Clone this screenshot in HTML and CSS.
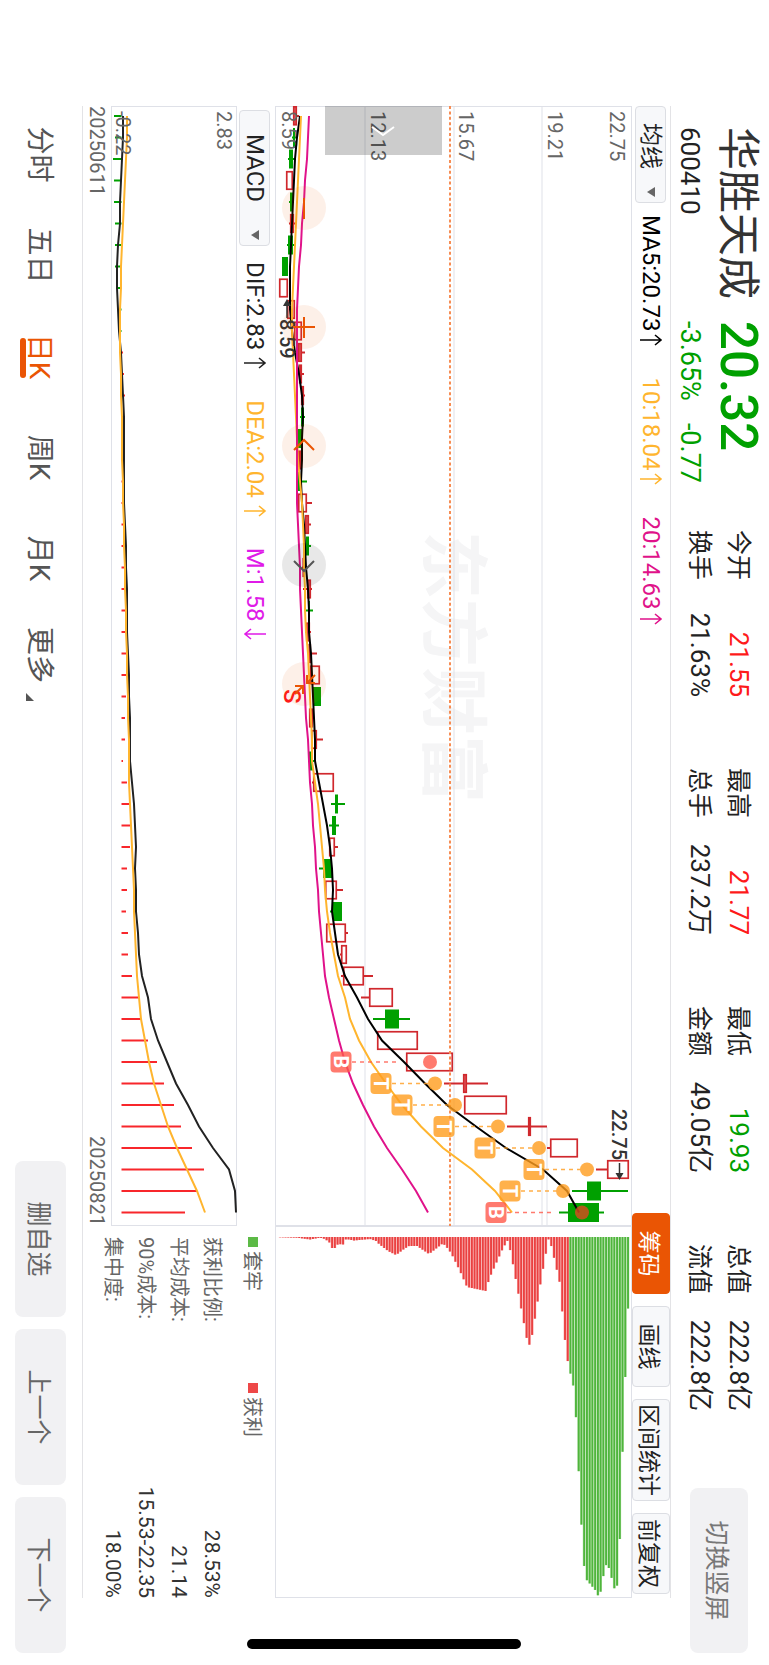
FILE: index.html
```html
<!DOCTYPE html>
<html lang="zh-CN">
  <head>
    <meta charset="UTF-8" />
    <meta name="viewport" content="width=device-width, initial-scale=1.0" />
    <title>华胜天成 600410</title>
    <link rel="stylesheet" href="styles.css">
  </head>
  <body>
    <div class="screen">
      <svg class="defs" width="0" height="0">
        <symbol id="arrow" viewBox="0 0 12 24">
          <path d="M6 23V2M1 8L6 2L11 8" fill="none" stroke="currentColor" stroke-width="1.6" />
        </symbol>
      </svg>

      <header class="header">
        <div class="quote">
          <h1 class="name">华胜天成</h1>
          <div class="price">20.32</div>
          <div class="code">600410</div>
          <div class="change"><span>-3.65%</span><span>-0.77</span></div>
        </div>
        <div class="stats">
          <div class="stat"><span>今开</span><span class="num up">21.55</span></div>
          <div class="stat"><span>最高</span><span class="num up">21.77</span></div>
          <div class="stat"><span>最低</span><span class="num down">19.93</span></div>
          <div class="stat"><span>总值</span><span class="num">222.8亿</span></div>
          <div class="stat"><span>换手</span><span class="num">21.63%</span></div>
          <div class="stat"><span>总手</span><span class="num">237.2万</span></div>
          <div class="stat"><span>金额</span><span class="num">49.05亿</span></div>
          <div class="stat"><span>流值</span><span class="num">222.8亿</span></div>
        </div>
        <button class="btn btn-switch">切换竖屏</button>
      </header>

      <div class="toolbar">
        <div class="picker">
          <select class="select" aria-label="主图指标">
            <option>均线</option>
          </select>
        </div>
        <div class="values">
          <span class="value black">MA5:20.73<svg class="arrow"><use href="#arrow" /></svg></span>
          <span class="value gold">10:18.04<svg class="arrow"><use href="#arrow" /></svg></span>
          <span class="value pink">20:14.63<svg class="arrow"><use href="#arrow" /></svg></span>
        </div>
        <div class="tools">
          <button class="tool tool-active">筹码</button>
          <button class="tool">画线</button>
          <button class="tool">区间统计</button>
          <button class="tool">前复权</button>
        </div>
      </div>

      <div class="charts">
        <div class="kline">
          <svg id="kline" class="chart" viewBox="0 0 1120 357"></svg>
          <button class="drawer" aria-label="展开">
            <svg viewBox="0 0 12 24"><path d="M2 1L10 12L2 23" fill="none" stroke="#fff" stroke-width="2" /></svg>
          </button>
          <div class="controls">
            <button class="control" aria-label="缩小">
              <svg viewBox="0 0 44 44"><path d="M12 22H33" /></svg>
            </button>
            <button class="control" aria-label="放大">
              <svg viewBox="0 0 44 44"><path d="M12 22H33M22 11V33" /></svg>
            </button>
            <button class="control" aria-label="左移">
              <svg viewBox="0 0 44 44"><path d="M26 12L16 22L26 32" /></svg>
            </button>
            <button class="control control-off" aria-label="右移">
              <svg viewBox="0 0 44 44"><path d="M18 12L28 22L18 32" /></svg>
            </button>
            <button class="control" aria-label="收起">
              <svg viewBox="0 0 44 44"><path d="M13 11L21 19M13 19H21V11M32 31L24 23M24 31V23H32" /></svg>
            </button>
          </div>
        </div>
        <svg id="chips" class="chart" viewBox="0 0 372 357"></svg>
      </div>

      <div class="lower">
        <div class="macd">
          <div class="macd-bar">
            <div class="picker picker-wide">
              <select class="select" aria-label="副图指标">
                <option>MACD</option>
              </select>
            </div>
            <div class="values">
              <span class="value dark">DIF:2.83<svg class="arrow"><use href="#arrow" /></svg></span>
              <span class="value gold">DEA:2.04<svg class="arrow"><use href="#arrow" /></svg></span>
              <span class="value violet">M:1.58<svg class="arrow arrow-down"><use href="#arrow" /></svg></span>
            </div>
          </div>
          <svg id="macd" class="chart" viewBox="0 0 1120 126"></svg>
          <div class="dates"><span>20250611</span><span>20250821</span></div>
        </div>
        <div class="cost">
          <div class="legend">
            <span class="legend-item"><i class="square square-green"></i>套牢</span>
            <span class="legend-item"><i class="square square-red"></i>获利</span>
          </div>
          <dl class="cost-list">
            <div><dt>获利比例:</dt><dd>28.53%</dd></div>
            <div><dt>平均成本:</dt><dd>21.14</dd></div>
            <div><dt>90%成本:</dt><dd>15.53-22.35</dd></div>
            <div><dt>集中度:</dt><dd>18.00%</dd></div>
          </dl>
        </div>
      </div>

      <footer class="footer">
        <nav class="periods">
          <a class="period" href="#">分时</a>
          <a class="period" href="#">五日</a>
          <a class="period period-active" href="#">日K</a>
          <a class="period" href="#">周K</a>
          <a class="period" href="#">月K</a>
          <a class="period period-more" href="#">更多</a>
        </nav>
        <div class="actions">
          <button class="btn">删自选</button>
          <button class="btn">上一个</button>
          <button class="btn">下一个</button>
        </div>
      </footer>

      <div class="home-indicator"></div>
    </div>

    <script src="script.js"></script>
  </body>
</html>
```

FILE: styles.css
```css
* {
  box-sizing: border-box;
}

html,
body {
  margin: 0;
  height: 100%;
  overflow: hidden;
  background-color: #fff;
}

body,
button,
select {
  font-family: Roboto, "Noto Sans CJK SC", sans-serif;
}

.defs {
  display: block;
}

/* The landscape screen is turned clockwise to fill a portrait window */
.screen {
  position: relative;
  display: flex;
  flex-direction: column;
  width: 100vh;
  height: 100vw;
  overflow: hidden;
  transform-origin: top left;
  transform: translateX(100vw) rotate(90deg);
  color: #222;
}

/* Header */
.header {
  display: flex;
  align-items: flex-start;
  height: 98px;
  padding: 0 12px 0 127px;
}

.quote {
  display: grid;
  grid-template-columns: auto auto;
  column-gap: 22px;
  row-gap: 8px;
  width: 403px;
  padding-top: 6px;
  justify-content: start;
  white-space: nowrap;
}

.name {
  margin: 0;
  font-size: 43px;
  font-weight: 400;
  line-height: 50px;
  color: #333;
}

.price {
  font-size: 51px;
  font-weight: 500;
  line-height: 50px;
  color: #00a000;
}

.code,
.change {
  font-size: 26px;
  line-height: 30px;
}

.change {
  display: flex;
  gap: 22px;
  font-size: 27px;
  color: #00a000;
}

.stats {
  display: grid;
  grid-template-columns: repeat(4, 167px);
  column-gap: 71px;
  padding-top: 11px;
}

.stat {
  display: flex;
  justify-content: space-between;
  font-size: 25px;
  line-height: 39px;
}

.num {
  font-size: 26px;
}

.up {
  color: #fe1a1a;
}

.down {
  color: #00a000;
}

.btn {
  width: 156px;
  height: 51px;
  padding: 0;
  border: none;
  border-radius: 8px;
  background-color: #f1f1f3;
  color: #666;
  font-size: 25px;
}

.btn-switch {
  width: 165px;
  height: 58px;
  margin: 21px 0 0 auto;
  color: #777;
}

/* Indicator bars */
.toolbar {
  display: flex;
  align-items: center;
  height: 39px;
  margin: 0 67px 0 106px;
  padding-right: 4px;
  border-top: 1px solid #e3e3e6;
}

.picker {
  position: relative;
  width: 97px;
  height: 31px;
}

.picker::after {
  content: "";
  position: absolute;
  right: 6px;
  top: 11px;
  border: 5px solid transparent;
  border-top: 8px solid #666;
  border-bottom: none;
  pointer-events: none;
}

.picker-wide {
  width: 136px;
}

.select {
  width: 100%;
  height: 100%;
  padding: 0 0 0 16px;
  border: 1px solid #dcdee3;
  border-radius: 4px;
  background-color: #f7f8fa;
  color: #222;
  font-size: 23px;
  line-height: 29px;
  appearance: none;
}

.picker-wide .select {
  padding-left: 23px;
  font-size: 24px;
}

.values {
  display: flex;
  gap: 31px;
  margin-left: 12px;
}

.picker-wide + .values {
  margin-left: 16px;
}

.value {
  display: flex;
  align-items: center;
  gap: 3px;
  font-size: 24px;
  line-height: 30px;
}

.macd-bar .value {
  gap: 7px;
}

.arrow {
  width: 12px;
  height: 24px;
}

.arrow-down {
  transform: rotate(180deg);
}

.black {
  color: #000;
}

.dark {
  color: #222;
}

.gold {
  color: #ffb52e;
}

.pink {
  color: #e0128a;
}

.violet {
  color: #e01be8;
}

.tools {
  display: flex;
  gap: 12px;
  height: 100%;
  margin-left: auto;
}

.tool {
  min-width: 81px;
  padding: 0 4px;
  border: 1px solid #dcdee3;
  border-radius: 4px;
  background-color: #f7f8fa;
  color: #222;
  font-size: 23px;
}

.tool-active {
  border-color: #ea5504;
  background-color: #ea5504;
  color: #fff;
}

/* Charts */
.charts,
.lower {
  display: grid;
  grid-template-columns: 1120fr 372fr;
  margin: 0 67px 0 106px;
}

.chart {
  display: block;
  width: 100%;
}

.axis {
  font-size: 20px;
  fill: #666;
}

.mark {
  font-size: 20px;
  font-weight: 500;
  fill: #333;
}

.watermark {
  font-size: 68px;
  font-weight: 700;
  fill: #f5f5f6;
}

.badge {
  font-size: 20px;
  font-weight: 700;
  text-anchor: middle;
  fill: #fff;
}

.sell {
  font-size: 24px;
  font-weight: 500;
  fill: #fe1a1a;
}

.kline {
  position: relative;
}

.drawer {
  position: absolute;
  left: 0;
  top: 190px;
  width: 49px;
  height: 117px;
  padding: 0;
  border: none;
  background-color: rgba(0, 0, 0, 0.2);
}

.drawer svg {
  display: block;
  width: 12px;
  height: 24px;
  margin: 0 auto;
}

.controls {
  position: absolute;
  left: 80px;
  bottom: 7px;
  display: flex;
  gap: 75px;
}

.control {
  width: 44px;
  height: 44px;
  padding: 0;
  border: none;
  border-radius: 50%;
  background-color: rgba(234, 85, 4, 0.09);
}

.control svg {
  display: block;
  width: 44px;
  height: 44px;
  fill: none;
  stroke: #ea5504;
  stroke-width: 2;
}

.control-off {
  background-color: rgba(0, 0, 0, 0.09);
}

.control-off svg {
  stroke: #555;
}

.lower {
  border-bottom: 1px solid #e3e3e6;
}

.macd-bar {
  display: flex;
  align-items: center;
  height: 38px;
  padding: 2px 0 0 4px;
}

.dates {
  display: flex;
  justify-content: space-between;
  font-size: 20px;
  line-height: 28px;
  color: #666;
}

.cost {
  padding-left: 11px;
  color: #666;
}

.legend {
  display: flex;
  gap: 92px;
  height: 47px;
  padding-bottom: 4px;
  align-items: center;
  font-size: 20px;
}

.legend-item {
  display: flex;
  align-items: center;
  gap: 4px;
}

.square {
  width: 10px;
  height: 10px;
}

.square-green {
  background-color: #5cba46;
}

.square-red {
  background-color: #ee4848;
}

.cost-list {
  margin: 0;
}

.cost-list div {
  display: flex;
  justify-content: space-between;
  line-height: 33px;
}

.cost-list dt {
  font-size: 20px;
}

.cost-list dd {
  margin: 0;
  font-size: 21px;
  color: #333;
}

/* Footer */
.footer {
  display: flex;
  flex: 1;
  align-items: center;
  justify-content: space-between;
  padding: 0 12px 0 104px;
}

.periods {
  display: flex;
  padding-top: 4px;
}

.period {
  position: relative;
  width: 101px;
  color: #555;
  font-size: 28px;
  line-height: 50px;
  text-align: center;
  text-decoration: none;
}

.period-active {
  color: #ea5504;
}

.period-active::after {
  content: "";
  position: absolute;
  left: 32px;
  bottom: 6px;
  width: 40px;
  height: 6px;
  border-radius: 3px;
  background-color: #ea5504;
}

.period-more {
  width: 92px;
}

.period-more::after {
  content: "";
  position: absolute;
  right: 0;
  bottom: 12px;
  border-left: 8px solid transparent;
  border-bottom: 8px solid #555;
}

.actions {
  display: flex;
  gap: 12px;
}

.home-indicator {
  position: absolute;
  right: 16px;
  top: 248px;
  width: 10px;
  height: 274px;
  border-radius: 5px;
  background-color: #000;
}
```

FILE: script.js
```js
var RED = "#d0282d";
var GREEN = "#00a000";
var GOLD = "#ffb52e";
var FRAME = "#dfe1e8";
var STEP = 21.5;

// [color, body low, body high, low, high], all as levels above the screen bottom
var candles = [
  ["r", 293, 297, 293, 299], ["g", 293, 295, 292, 296], ["g", 289, 293, 288, 294],
  ["r", 286, 293, 286, 293], ["g", 290, 293, 289, 294], ["r", 290, 294, 289, 296],
  ["g", 288, 293, 287, 294], ["g", 282, 288, 282, 288], ["r", 279, 288, 279, 288],
  ["r", 287, 295, 287, 295], ["r", 294, 302, 294, 302], ["r", 298, 302, 298, 305],
  ["r", 299, 302, 299, 304], ["r", 301, 304, 301, 305], ["g", 301, 304, 300, 305],
  ["g", 298, 302, 298, 302], ["r", 298, 301, 298, 302], ["g", 298, 300, 298, 307],
  ["r", 298, 307, 298, 312], ["r", 305, 309, 305, 311], ["g", 306, 309, 306, 311],
  ["r", 303, 305, 302, 306], ["r", 307, 311, 303, 312], ["g", 308, 310, 306, 313],
  ["r", 306, 310, 305, 311], ["r", 309, 311, 309, 317], ["r", 310, 320, 310, 320],
  ["g", 313, 321, 313, 321], ["r", 309, 313, 309, 314], ["r", 311, 317, 311, 323],
  ["g", 309, 313, 308, 314], ["r", 313, 334, 312, 334], ["g", 335, 338, 331, 345],
  ["g", 332, 336, 329, 339], ["r", 329, 335, 329, 338], ["g", 323, 332, 319, 332],
  ["r", 325, 337, 325, 343], ["g", 333, 342, 330, 342], ["r", 326, 346, 326, 348],
  ["r", 341, 347, 340, 347], ["r", 343, 364, 341, 373], ["r", 369, 393, 361, 393],
  ["g", 385, 399, 373, 410], ["r", 377, 418, 377, 418], ["r", 406, 453, 406, 453],
  ["r", 463, 467, 444, 488], ["r", 464, 507, 464, 507], ["r", 528, 531, 507, 547],
  ["r", 550, 578, 547, 578], ["r", 607, 629, 596, 629], ["g", 587, 601, 572, 628],
  ["g", 568, 599, 559, 604]
];

var ma5 = [300, 297, 295, 294, 293, 292, 291, 290, 290, 290, 292, 295, 299, 302, 303, 302, 302, 301,
  302, 304, 305, 306, 308, 309, 309, 311, 312, 313, 314, 315, 315, 319, 323, 327, 330, 332, 333, 332,
  335, 338, 345, 357, 368, 382, 404, 425, 447, 476, 506, 543, 567, 579];
var ma10 = [301, 300, 299, 298, 297, 296, 295, 294, 293, 292, 292, 293, 294, 295, 296, 297, 298, 300,
  302, 303, 304, 304, 305, 305, 306, 308, 309, 310, 311, 312, 312, 315, 318, 320, 322, 324, 325, 327,
  330, 334, 338, 345, 350, 359, 371, 386, 402, 421, 443, 472, 495, 512];
var ma20 = [309, 308, 307, 305, 304, 302, 301, 299, 298, 297, 297, 297, 297, 297, 297, 297, 297, 297,
  297, 298, 299, 300, 300, 301, 302, 303, 304, 305, 306, 308, 309, 310, 312, 313, 315, 316, 318, 319,
  321, 323, 325, 329, 334, 339, 345, 353, 363, 374, 387, 402, 416, 428];

// [candle, letter, badge level, dot level, end of the dashed line]
var trades = [
  [44, "B", 341, 430, 396], [45, "T", 381, 435, 435], [46, "T", 402, 455, 455],
  [47, "T", 444, 498, 498], [48, "T", 485, 539, 539], [49, "T", 534, 587, 587],
  [50, "T", 510, 563, 563], [51, "B", 496, 582, 551]
];

var bars = [114, 115, 113, 114, 114, 115, 115, 115, 116, 119, 120, 123, 124, 125, 125, 125, 124, 123,
  124, 124, 123, 124, 125, 125, 125, 126, 126, 126, 125, 125, 123, 127, 130, 130, 130, 127, 127, 126,
  128, 128, 132, 139, 142, 148, 157, 164, 174, 181, 192, 204, 197, 185];
var dif = [123, 123, 122, 121, 120, 120, 118, 117, 117, 118, 119, 121, 122, 123, 124, 124, 124, 124,
  124, 125, 126, 126, 127, 127, 127, 128, 129, 129, 130, 130, 130, 132, 134, 135, 136, 135, 136, 136,
  138, 139, 142, 148, 151, 158, 167, 176, 188, 199, 213, 229, 235, 236];
var dea = [127, 127, 126, 125, 124, 123, 122, 121, 121, 120, 120, 120, 121, 121, 122, 122, 122, 123,
  123, 124, 124, 125, 125, 126, 126, 127, 127, 128, 128, 129, 129, 129, 130, 131, 132, 133, 134, 134,
  135, 136, 137, 139, 141, 145, 149, 154, 161, 168, 177, 187, 197, 205];

// Chip distribution outline: [height above the chart bottom, bar length]
var chips = [[4, 0.3], [21, 0.7], [34, 2.5], [44, 0.7], [49, 2], [54, 6], [56, 11], [59, 11], [62, 7],
  [67, 7.5], [70, 2], [78, 3.5], [94, 2], [100, 4], [103, 7], [112, 14], [120, 18], [128, 12], [133, 9],
  [141, 9], [153, 17], [166, 7], [169, 8], [175, 16], [183, 32], [191, 50], [210, 54], [213, 42],
  [227, 11], [232, 3], [235, 17], [243, 60], [251, 103], [254, 109], [257, 93], [265, 43], [271, 10],
  [273, 0], [276, 12], [284, 47], [287, 84], [290, 113], [292, 126], [298, 152], [301, 196],
  [303, 242], [306, 299], [309, 341], [320, 354], [323, 361], [325, 353], [328, 335], [331, 325],
  [334, 335], [339, 354], [342, 346], [345, 271], [347, 196], [350, 121], [353, 46]];

function candleX(i) {
  return 10 + STEP * i;
}

function line(x1, y1, x2, y2, color, width, dash) {
  return '<line x1="' + x1 + '" y1="' + y1 + '" x2="' + x2 + '" y2="' + y2 + '" stroke="' + color +
    '" stroke-width="' + width + '"' + (dash ? ' stroke-dasharray="' + dash + '"' : "") + " />";
}

function rect(x, y, w, h, fill, extra) {
  return '<rect x="' + x + '" y="' + y + '" width="' + w + '" height="' + h + '" fill="' + fill +
    '" ' + (extra || "") + " />";
}

function text(x, y, cls, value) {
  return '<text x="' + x + '" y="' + y + '" class="' + cls + '">' + value + "</text>";
}

function curve(levels, top, color) {
  var points = levels.map(function (v, i) {
    return candleX(i) + "," + (top - v);
  });
  return '<polyline points="' + points.join(" ") + '" fill="none" stroke="' + color +
    '" stroke-width="2" />';
}

function frame(w, h) {
  return rect(0.5, 0.5, w - 1, h - 1, "none", 'stroke="' + FRAME + '"');
}

function drawKline() {
  var top = 632;
  var out = text(425, 203, "watermark", "东方财富");

  out += frame(1120, 357);
  [90, 178, 267].forEach(function (y) {
    out += line(0, y, 1120, y, FRAME, 1);
  });
  out += line(1021, 85, 1120, 85, FRAME, 1);

  candles.forEach(function (c, i) {
    var x = candleX(i);
    var color = c[0] === "r" ? RED : GREEN;
    var left = i === 0 ? 0 : x - 9.5;
    if (c[3] < c[1]) out += line(x, top - c[3], x, top - c[1], color, 2);
    if (c[4] > c[2]) out += line(x, top - c[4], x, top - c[2], color, 2);
    if (c[0] === "g") {
      out += rect(left, top - c[2], x + 9.5 - left, c[2] - c[1], GREEN);
    } else {
      out += rect(left + 0.75, top - c[2] + 0.75, x + 8 - left, Math.max(c[2] - c[1] - 1.5, 1),
        c[2] - c[1] < 5 ? "#e06a6e" : "none", 'stroke="' + RED + '" stroke-width="1.7"');
    }
  });

  out += line(0, 182, 1120, 182, "#f78c52", 2, "3 2.4");
  out += text(5, 22, "axis", "22.75") + text(5, 84, "axis", "19.21") + text(5, 173, "axis", "15.67");
  out += text(5, 261, "axis", "12.13") + text(5, 350, "axis", "8.59");

  out += curve(ma5, top, "#000") + curve(ma10, top, GOLD) + curve(ma20, top, "#e0128a");

  trades.forEach(function (t) {
    var x = candleX(t[0]);
    var color = t[1] === "B" ? "#ff5a4a" : "#ff9d1e";
    out += '<g opacity="0.8">';
    out += line(x, top - t[2] - 11, x, top - t[4], color, 1.5, "4 4");
    out += rect(x - 10.5, top - t[2] - 10.5, 21, 21, color, 'rx="4"');
    out += '<circle cx="' + x + '" cy="' + (top - t[3]) + '" r="7" fill="' +
      (t[0] === 51 ? "#dd4a20" : color) + '" />';
    out += "</g>" + text(x, top - t[2] + 7, "badge", t[1]);
  });

  // Highest and lowest price
  out += text(1003, 20, "mark", "22.75") + line(1057, 12.5, 1070, 12.5, "#333", 1.5);
  out += '<path d="M1067 8.5L1074 12.5L1067 16.5Z" fill="#333" />';
  out += text(213, 352, "mark", "8.59") + line(197, 345, 212, 345, "#333", 1.5);
  out += '<path d="M200 341L193 345L200 349Z" fill="#333" />';
  out += text(583, 348, "sell", "S");

  document.getElementById("kline").innerHTML = out;
}

function drawChips() {
  var out = frame(372, 357);
  var k = 0;
  for (var h = 4; h <= 353.5; h += 2.74) {
    while (k < chips.length - 2 && chips[k + 1][0] < h) k++;
    var a = chips[k];
    var b = chips[k + 1];
    var t = Math.min((h - a[0]) / (b[0] - a[0]), 1);
    var w = a[1] + (b[1] - a[1]) * t;
    var green = h > 294;
    out += rect(11, 356 - h - 1.4, w, 2.8, green ? "#bfe5b6" : "#f8b5b5");
    out += rect(11, 356 - h - 1, w, 1.9, green ? "#4fb53c" : "#ea4141");
  }
  document.getElementById("chips").innerHTML = out;
}

function drawMacd() {
  var top = 237;
  var zero = top - 121.5;
  var out = frame(1120, 126);
  bars.forEach(function (v, i) {
    out += line(candleX(i), zero, candleX(i), top - v, v < 121 ? GREEN : "#f8262b", 2);
  });
  out += curve(dif, top, "#222") + curve(dea, top, GOLD);
  out += text(5, 20, "axis", "2.83") + text(5, 121, "axis", "-0.22");
  document.getElementById("macd").innerHTML = out;
}

drawKline();
drawChips();
drawMacd();
```
